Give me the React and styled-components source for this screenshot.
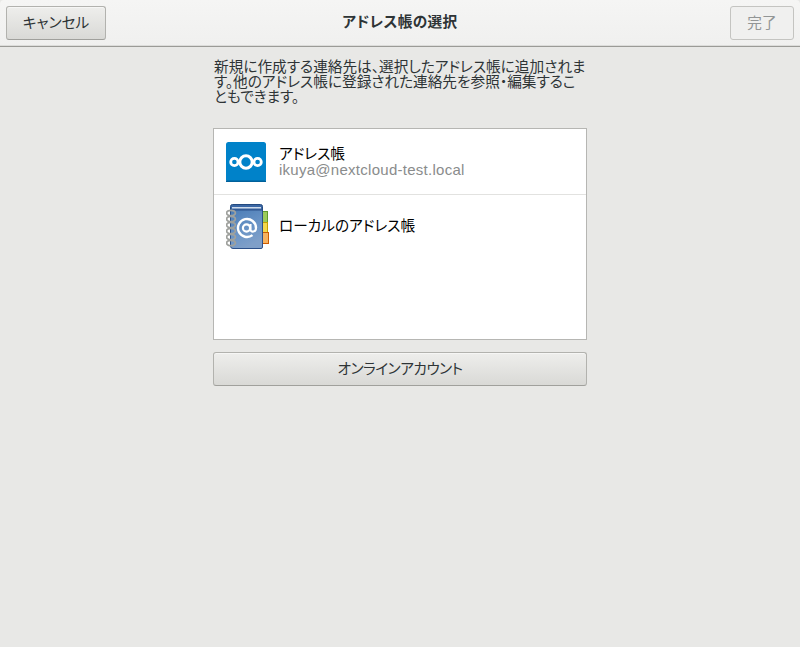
import React from 'react';
import styled, { createGlobalStyle } from 'styled-components';

const Global = createGlobalStyle`
  html, body { margin: 0; padding: 0; background: #e8e8e6; }
  * { box-sizing: border-box; }
`;

const fontStack = `"Liberation Sans", "Noto Sans CJK JP", sans-serif`;

const Page = styled.div`
  width: 800px;
  height: 647px;
  overflow: hidden;
  background: #e8e8e6;
  font-family: ${fontStack};
  font-size: 14.67px;
  font-feature-settings: 'palt';
  color: #2e3436;
`;

const HeaderBar = styled.header`
  height: 47px;
  display: grid;
  grid-template-columns: 1fr auto 1fr;
  align-items: start;
  padding: 6px 6px 0;
  background: linear-gradient(#f5f5f4, #f0f0ef);
  border-bottom: 1px solid #9b9b97;
  border-radius: 4px 4px 0 0;
  box-shadow: inset 0 -1px 0 #dcdcda;
`;

const HeaderTitle = styled.h1`
  margin: 0;
  font-size: 14.67px;
  font-weight: 700;
  line-height: 33px;
  letter-spacing: 0.35px;
  color: #2e3436;
`;

const HeaderEnd = styled.div`
  display: flex;
  justify-content: ${p => p.$align};
`;

const Button = styled.button`
  display: block;
  height: 34px;
  width: ${p => p.$width};
  padding: 0 0 3px;
  border: 1px solid #b2b2ae;
  border-bottom-color: #a0a09c;
  border-radius: 3px;
  background: linear-gradient(#eeeeec, #d9d9d6);
  font-family: inherit;
  font-size: 14.67px;
  font-feature-settings: inherit;
  letter-spacing: ${p => p.$tracking || '0'};
  color: #2e3436;
  box-shadow: inset 0 1px 0 #f6f6f5;
`;

const DisabledButton = styled(Button)`
  background: #f0f0ef;
  border-color: #c4c4c1;
  color: #929595;
  box-shadow: none;
`;

const Content = styled.main`
  width: 374px;
  margin: 13px auto 0;
  display: flex;
  flex-direction: column;
`;

const Intro = styled.p`
  margin: 0;
  padding-left: 1px;
  font-size: 14.67px;
  line-height: 15px;
  color: #2e3436;
  white-space: nowrap;
`;

const AccountList = styled.ul`
  list-style: none;
  margin: 23px 0 12px;
  padding: 0;
  height: 212px;
  background: #fff;
  border: 1px solid #b6b6b3;
`;

const AccountRow = styled.li`
  height: ${p => p.$height};
  display: flex;
  align-items: flex-start;
  gap: 12px;
  padding: ${p => p.$padding};
  border-bottom: ${p => (p.$divider ? '1px solid #e2e2e0' : 'none')};
`;

const IconBox = styled.span`
  flex: none;
  width: 41px;
  height: 41px;
  display: block;
  svg { display: block; }
`;

const RowText = styled.div`
  display: flex;
  flex-direction: column;
  padding-top: ${p => p.$top};
`;

const RowName = styled.span`
  font-size: 14.67px;
  line-height: 16px;
  color: #000;
`;

const RowMail = styled.span`
  font-size: 15px;
  line-height: 16px;
  letter-spacing: 0.27px;
  color: #8a8c8c;
`;

function NextcloudIcon() {
  return (
    <svg width="41" height="41" viewBox="0 0 41 41">
      <rect x="0" y="0" width="40" height="40" rx="2.5" fill="#0082c9" />
      <rect x="0" y="38.5" width="40" height="1.5" fill="#00609a" />
      <circle cx="20" cy="20" r="6.2" fill="none" stroke="#fff" strokeWidth="3" />
      <circle cx="8.4" cy="20" r="3.7" fill="none" stroke="#fff" strokeWidth="2.8" />
      <circle cx="31.6" cy="20" r="3.7" fill="none" stroke="#fff" strokeWidth="2.8" />
    </svg>
  );
}

function AddressBookIcon() {
  const rings = [10, 16, 22, 28, 34, 40];
  return (
    <svg width="44" height="48" viewBox="0 0 44 48">
      <defs>
        <linearGradient id="cover" x1="0" y1="0" x2="0.4" y2="1">
          <stop offset="0" stopColor="#4a7cb6" />
          <stop offset="0.6" stopColor="#6a94c6" />
          <stop offset="1" stopColor="#7f9fc8" />
        </linearGradient>
      </defs>
      <rect x="36.5" y="8.5" width="5" height="11" fill="#9ccb5a" stroke="#5f9a2c" />
      <rect x="36.5" y="19.5" width="5" height="10" fill="#f3d84c" stroke="#c4a000" />
      <rect x="36.5" y="29.5" width="6" height="11" fill="#f6b25f" stroke="#ce5c00" />
      <path d="M4.5 3.5 Q4.5 1.5 6.5 1.5 H34.5 Q36.5 1.5 36.5 3.5 V8 H4.5 Z" fill="#3a66a4" stroke="#234a80" />
      <rect x="6" y="4" width="29" height="1.5" fill="#cfdcec" />
      <path d="M4.5 7 H36.5 V44 Q36.5 45.5 35 45.5 H7 Q4.5 45.5 4.5 43 Z" fill="url(#cover)" stroke="#2c5089" />
      <path d="M30 25 A9 9 0 1 0 26.5 32.1" fill="none" stroke="#fff" strokeWidth="2.4" />
      <circle cx="20.5" cy="25" r="3.6" fill="none" stroke="#fff" strokeWidth="2.2" />
      <path d="M24.5 21 V26.5 Q24.8 29 27.5 28.5 Q30 28 30 25" fill="none" stroke="#fff" strokeWidth="2.1" />
      {rings.map(y => (
        <ellipse key={y} cx="5" cy={y} rx="4.4" ry="2.7" fill="none" stroke="#9fa19d" strokeWidth="1.8" />
      ))}
    </svg>
  );
}

export default function App() {
  return (
    <Page>
      <Global />
      <HeaderBar>
        <HeaderEnd $align="flex-start">
          <Button $width="100px">キャンセル</Button>
        </HeaderEnd>
        <HeaderTitle>アドレス帳の選択</HeaderTitle>
        <HeaderEnd $align="flex-end">
          <DisabledButton $width="64px" disabled>完了</DisabledButton>
        </HeaderEnd>
      </HeaderBar>
      <Content>
        <Intro>
          新規に作成する連絡先は、選択したアドレス帳に追加されま<br />
          す。他のアドレス帳に登録された連絡先を参照・編集するこ<br />
          ともできます。
        </Intro>
        <AccountList>
          <AccountRow $height="66px" $padding="13px 12px 0" $divider>
            <IconBox><NextcloudIcon /></IconBox>
            <RowText $top="4px">
              <RowName>アドレス帳</RowName>
              <RowMail>ikuya@nextcloud-test.local</RowMail>
            </RowText>
          </AccountRow>
          <AccountRow $height="60px" $padding="8px 12px 0">
            <IconBox><AddressBookIcon /></IconBox>
            <RowText $top="15px">
              <RowName>ローカルのアドレス帳</RowName>
            </RowText>
          </AccountRow>
        </AccountList>
        <Button $width="100%" $tracking="-0.5px">オンラインアカウント</Button>
      </Content>
    </Page>
  );
}
